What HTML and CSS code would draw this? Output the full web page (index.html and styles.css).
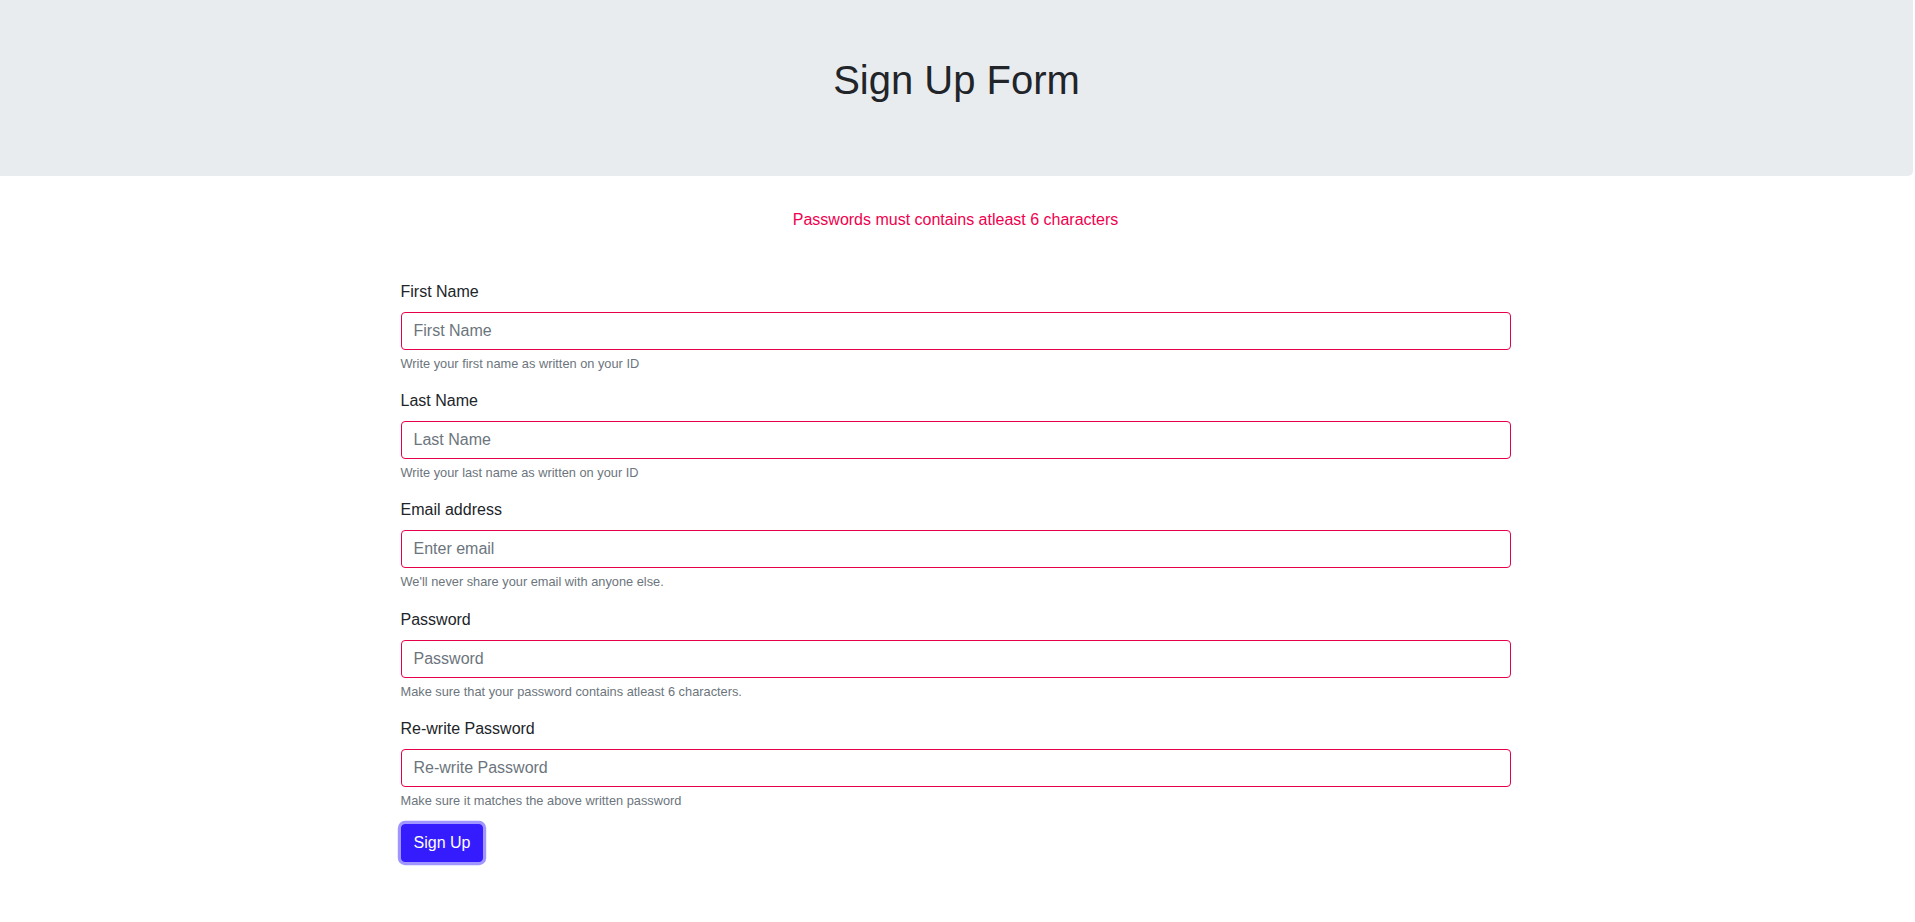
FILE: index.html
```html
<!DOCTYPE html>
<html lang="en">
<head>
<meta charset="utf-8">
<title>Sign Up Form</title>
<link rel="stylesheet" href="styles.css">
</head>
<body>
<div class="page">
  <header class="hero">
    <h1 class="hero-title">Sign Up Form</h1>
  </header>
  <p class="alert-msg">Passwords must contains atleast 6 characters</p>
  <div class="container">
    <form class="signup">
      <div class="form-group">
        <label class="label" for="fn">First Name</label>
        <input class="form-control" id="fn" type="text" placeholder="First Name">
        <small class="hint">Write your first name as written on your ID</small>
      </div>
      <div class="form-group">
        <label class="label" for="ln">Last Name</label>
        <input class="form-control" id="ln" type="text" placeholder="Last Name">
        <small class="hint">Write your last name as written on your ID</small>
      </div>
      <div class="form-group">
        <label class="label" for="em">Email address</label>
        <input class="form-control" id="em" type="email" placeholder="Enter email">
        <small class="hint">We'll never share your email with anyone else.</small>
      </div>
      <div class="form-group">
        <label class="label" for="pw">Password</label>
        <input class="form-control" id="pw" type="password" placeholder="Password">
        <small class="hint">Make sure that your password contains atleast 6 characters.</small>
      </div>
      <div class="form-group form-group-last">
        <label class="label" for="pw2">Re-write Password</label>
        <input class="form-control" id="pw2" type="password" placeholder="Re-write Password">
        <small class="hint">Make sure it matches the above written password</small>
      </div>
      <button class="btn" type="button">Sign Up</button>
    </form>
  </div>
</div>
</body>
</html>
```

FILE: styles.css
```css
* { box-sizing: border-box; }

html, body {
  margin: 0;
  padding: 0;
  background: #fff;
}

body {
  font-family: "Liberation Sans", Arial, sans-serif;
  font-size: 16px;
  line-height: 1.5;
  color: #212529;
}

.page {
  margin-right: 4px;
}

.hero {
  background: #e9ecef;
  height: 176px;
  margin-right: -2px;
  padding-top: 56px;
  border-bottom-right-radius: 5px;
  text-align: center;
}

.hero-title {
  margin: 0;
  font-size: 40px;
  font-weight: 400;
  line-height: 48px;
  color: #212529;
}

.alert-msg {
  margin: 32px 0 0;
  text-align: center;
  color: #f0004e;
  font-size: 16px;
  line-height: 24px;
}

.container {
  max-width: 1140px;
  margin: 0 auto;
  padding: 48px 15px 40px;
}

.signup {
  display: flex;
  flex-direction: column;
  align-items: flex-start;
}

.form-group {
  display: flex;
  flex-direction: column;
  width: 100%;
  margin-bottom: 16px;
}

.form-group-last {
  margin-bottom: 14px;
}

.label {
  display: block;
  margin-bottom: 8px;
  line-height: 24px;
}

.form-control {
  display: block;
  width: 100%;
  height: 38px;
  padding: 6px 12px;
  font-family: inherit;
  font-size: 16px;
  line-height: 24px;
  color: #495057;
  background: #fff;
  border: 1px solid #e6004a;
  border-radius: 4px;
  outline: none;
}

.form-control::placeholder {
  color: #6c757d;
  opacity: 1;
}

.hint {
  display: block;
  margin-top: 4px;
  font-size: 12.8px;
  line-height: 19.2px;
  color: #6c757d;
}

.btn {
  display: inline-block;
  height: 38px;
  padding: 6px 12px;
  font-family: inherit;
  font-size: 16px;
  line-height: 24px;
  color: #fff;
  background: #341cff;
  border: 1px solid #341cff;
  border-radius: 4px;
  box-shadow: 0 0 0 3.2px rgba(130, 115, 255, 0.75);
  cursor: pointer;
}
```
